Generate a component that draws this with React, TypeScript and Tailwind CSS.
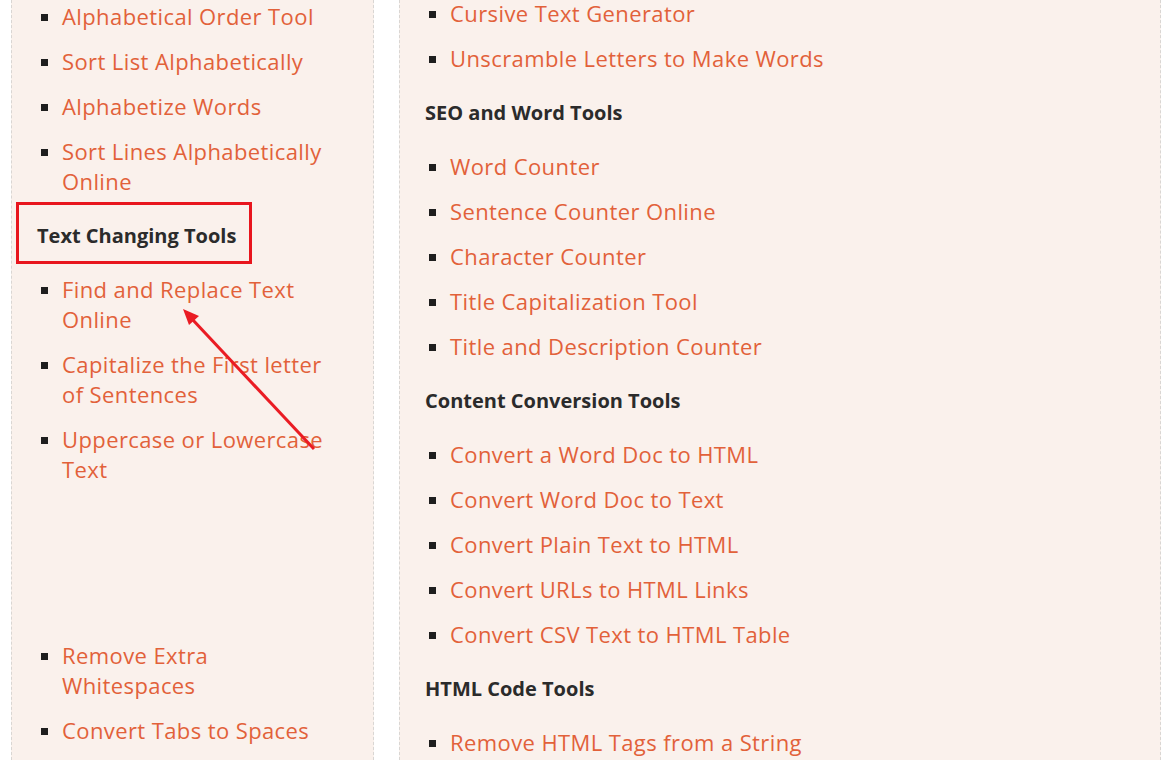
import React from "react";

const leftTop = [
  ["Alphabetical Order Tool"],
  ["Sort List Alphabetically"],
  ["Alphabetize Words"],
  ["Sort Lines Alphabetically", "Online"],
];
const leftMid = [
  ["Find and Replace Text", "Online"],
  ["Capitalize the First letter", "of Sentences"],
  ["Uppercase or Lowercase", "Text"],
];
const leftBottom = [["Remove Extra", "Whitespaces"], ["Convert Tabs to Spaces"]];

const rightGroups: { title?: string; items: string[] }[] = [
  { items: ["Cursive Text Generator", "Unscramble Letters to Make Words"] },
  {
    title: "SEO and Word Tools",
    items: [
      "Word Counter",
      "Sentence Counter Online",
      "Character Counter",
      "Title Capitalization Tool",
      "Title and Description Counter",
    ],
  },
  {
    title: "Content Conversion Tools",
    items: [
      "Convert a Word Doc to HTML",
      "Convert Word Doc to Text",
      "Convert Plain Text to HTML",
      "Convert URLs to HTML Links",
      "Convert CSV Text to HTML Table",
    ],
  },
  { title: "HTML Code Tools", items: ["Remove HTML Tags from a String"] },
];

function Item({ lines }: { lines: string[] }) {
  return (
    <li className="flex items-start">
      <span className="ml-[1px] mt-[12px] mr-[14px] h-[7px] w-[7px] shrink-0 bg-[#1e1e1e]" />
      <a className="relative -top-[1px] text-[#e2613a] text-[22px] tracking-[0.4px] leading-[30px]">
        {lines.map((l, i) => (
          <span key={i} className="block">
            {l}
          </span>
        ))}
      </a>
    </li>
  );
}

function Heading({ children }: { children: React.ReactNode }) {
  return (
    <h3 className="my-[24px] font-bold leading-[30px] text-[#2b2b2b] text-[20px]">{children}</h3>
  );
}

export default function App() {
  return (
    <div
      className="relative h-[760px] w-[1167px] overflow-hidden bg-white text-[21px]"
      style={{ fontFamily: '"Open Sans", sans-serif' }}
    >
      <div className="flex h-full pl-[11px] pr-[6px]">
        <div className="h-full w-[363px] shrink-0 border-x border-dashed border-[#d9d6d3] bg-[#faf1ec] pt-[2px]">
          <ul className="flex flex-col gap-[15px] pl-[28px]">
            {leftTop.map((l, i) => (
              <Item key={i} lines={l} />
            ))}
          </ul>
          <div className="pl-[25px]">
            <Heading>Text Changing Tools</Heading>
          </div>
          <ul className="flex flex-col gap-[15px] pl-[28px]">
            {leftMid.map((l, i) => (
              <Item key={i} lines={l} />
            ))}
            <li className="h-[126px]" />
            {leftBottom.map((l, i) => (
              <Item key={i} lines={l} />
            ))}
          </ul>
        </div>
        <div className="ml-[25px] h-full flex-1 border-x border-dashed border-[#d9d6d3] bg-[#faf1ec] mt-0">
          <div className="-mt-[1px] pl-[25px]">
            {rightGroups.map((g, gi) => (
              <div key={gi}>
                {g.title && <Heading>{g.title}</Heading>}
                <ul className="flex flex-col gap-[15px] pl-[3px]">
                  {g.items.map((t, i) => (
                    <Item key={i} lines={[t]} />
                  ))}
                </ul>
              </div>
            ))}
          </div>
        </div>
      </div>

      <div className="absolute left-[16px] top-[202px] h-[62px] w-[236px] border-[3px] border-[#e8151d]" />
      <svg className="absolute left-0 top-0" width="1167" height="760" viewBox="0 0 1167 760">
        <line x1="314" y1="449" x2="192" y2="319" stroke="#ea1c24" strokeWidth="3" />
        <polygon points="183,309 199,316 189,325" fill="#ea1c24" />
      </svg>
    </div>
  );
}
